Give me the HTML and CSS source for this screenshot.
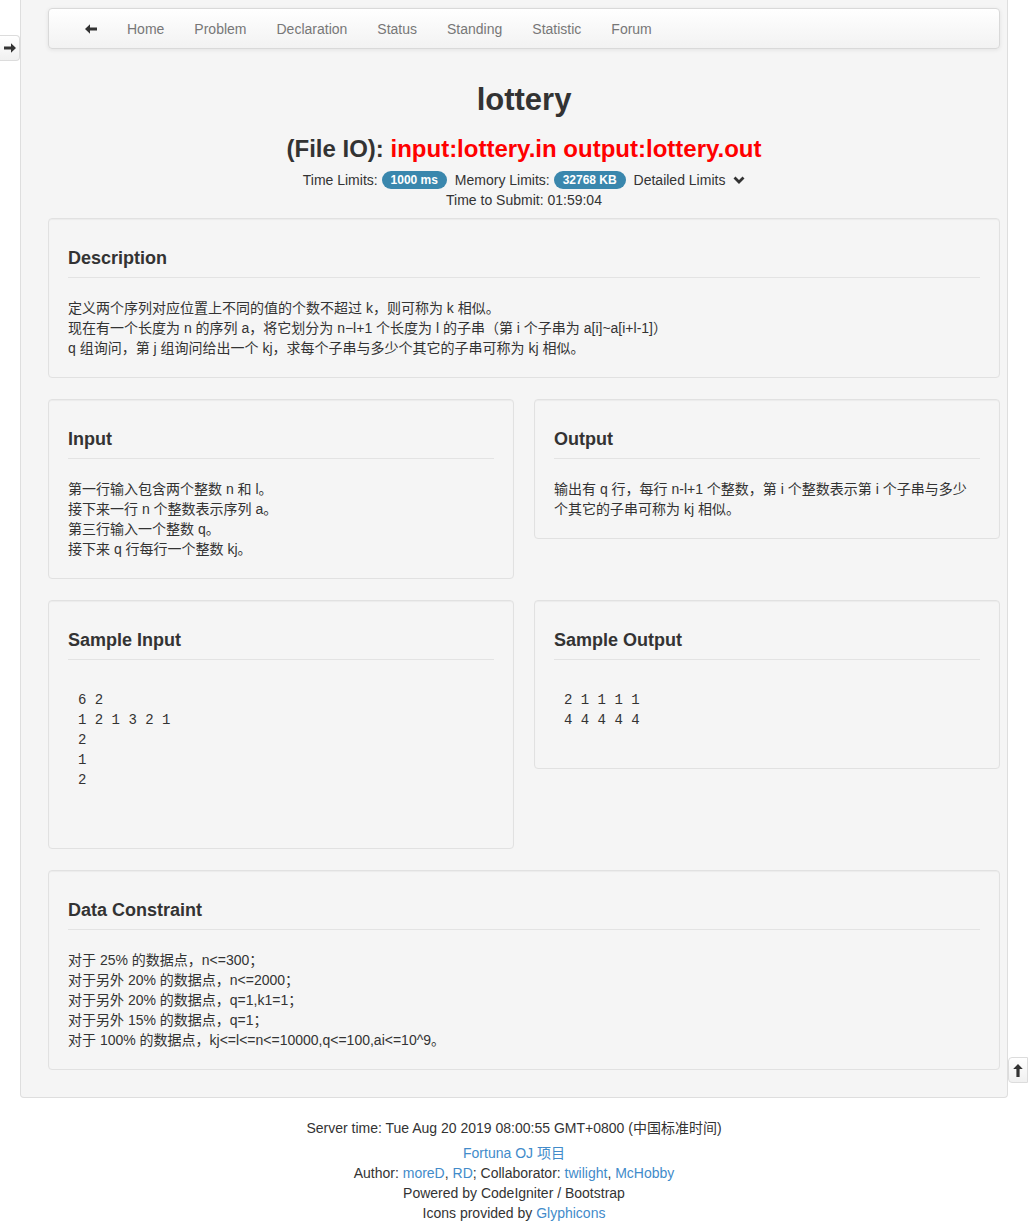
FILE: index.html
```html
<!DOCTYPE html>
<html lang="zh-CN">
<head>
<meta charset="utf-8">
<title>lottery</title>
<link rel="stylesheet" href="styles.css">
</head>
<body>
<a class="side-btn side-left" href="#"><svg class="ico" width="12" height="12" viewBox="0 0 12 12"><path d="M12 6 L7 1.2 V4.4 H0 V7.6 H7 V10.8 Z"/></svg></a>

<div class="frame">
  <nav class="navbar">
    <ul class="nav">
      <li><a href="#"><svg class="ico nav-ico" width="12" height="12" viewBox="0 0 12 12"><path d="M0 6 L5 1.2 V4.4 H12 V7.6 H5 V10.8 Z"/></svg></a></li>
      <li><a href="#">Home</a></li>
      <li><a href="#">Problem</a></li>
      <li><a href="#">Declaration</a></li>
      <li><a href="#">Status</a></li>
      <li><a href="#">Standing</a></li>
      <li><a href="#">Statistic</a></li>
      <li><a href="#">Forum</a></li>
    </ul>
  </nav>

  <header class="head">
    <h2 class="title">lottery</h2>
    <h3 class="fileio">(File IO): <span class="red">input:lottery.in output:lottery.out</span></h3>
    <div class="limits">Time Limits: <span class="badge">1000 ms</span> Memory Limits: <span class="badge">32768 KB</span> Detailed Limits <svg class="chev" width="12" height="10" viewBox="0 0 12 10"><path d="M1.5 2.5 L6 7 L10.5 2.5" fill="none" stroke="#333" stroke-width="2.8"/></svg></div>
    <div class="limits">Time to Submit: 01:59:04</div>
  </header>

  <section class="well">
    <h4>Description</h4>
    <p>定义两个序列对应位置上不同的值的个数不超过 k，则可称为 k 相似。<br>现在有一个长度为 n 的序列 a，将它划分为 n−l+1 个长度为 l 的子串（第 i 个子串为 a[i]~a[i+l-1]）<br>q 组询问，第 j 组询问给出一个 kj，求每个子串与多少个其它的子串可称为 kj 相似。</p>
  </section>

  <div class="cols">
    <section class="well">
      <h4>Input</h4>
      <p>第一行输入包含两个整数 n 和 l。<br>接下来一行 n 个整数表示序列 a。<br>第三行输入一个整数 q。<br>接下来 q 行每行一个整数 kj。</p>
    </section>
    <section class="well">
      <h4>Output</h4>
      <p>输出有 q 行，每行 n-l+1 个整数，第 i 个整数表示第 i 个子串与多少个其它的子串可称为 kj 相似。</p>
    </section>
  </div>

  <div class="cols">
    <section class="well">
      <h4>Sample Input</h4>
      <pre>6 2
1 2 1 3 2 1
2
1
2

</pre>
    </section>
    <section class="well">
      <h4>Sample Output</h4>
      <pre>2 1 1 1 1
4 4 4 4 4</pre>
    </section>
  </div>

  <section class="well">
    <h4>Data Constraint</h4>
    <p>对于 25% 的数据点，n&lt;=300；<br>对于另外 20% 的数据点，n&lt;=2000；<br>对于另外 20% 的数据点，q=1,k1=1；<br>对于另外 15% 的数据点，q=1；<br>对于 100% 的数据点，kj&lt;=l&lt;=n&lt;=10000,q&lt;=100,ai&lt;=10^9。</p>
  </section>
</div>

<footer class="footer">
  <p class="server">Server time: Tue Aug 20 2019 08:00:55 GMT+0800 (中国标准时间)</p>
  <p><a href="#">Fortuna OJ 项目</a></p>
  <p>Author: <a href="#">moreD</a>, <a href="#">RD</a>; Collaborator: <a href="#">twilight</a>, <a href="#">McHobby</a></p>
  <p>Powered by CodeIgniter / Bootstrap</p>
  <p>Icons provided by <a href="#">Glyphicons</a></p>
</footer>

<a class="side-btn side-right" href="#"><svg class="ico" width="12" height="13" viewBox="0 0 12 13"><path d="M6 0 L10.8 5 H7.6 V13 H4.4 V5 H1.2 Z"/></svg></a>
</body>
</html>
```
FILE: styles.css
```css
html, body {
  margin: 0;
  padding: 0;
  background: #fff;
}
body {
  font-family: "Liberation Sans", Arial, "Noto Sans CJK SC", sans-serif;
  font-size: 14px;
  line-height: 20px;
  color: #333;
}
a {
  color: #428bca;
  text-decoration: none;
}
.ico path {
  fill: #333;
}

.frame {
  box-sizing: border-box;
  width: 988px;
  margin-left: 20px;
  padding: 8px 7px 6px 27px;
  background: #f5f5f5;
  border: 1px solid #dedede;
  border-top: 0;
  border-radius: 0 0 4px 4px;
}

.navbar {
  box-sizing: border-box;
  height: 41px;
  background: linear-gradient(to bottom, #ffffff 0%, #f2f2f2 100%);
  border: 1px solid #d9d9d9;
  border-radius: 4px;
  box-shadow: 0 1px 4px rgba(0,0,0,0.08);
}
.nav {
  display: flex;
  list-style: none;
  margin: 0;
  padding: 0 0 0 21px;
}
.nav a {
  display: block;
  padding: 10px 15px 9px;
  line-height: 20px;
  color: #777;
  font-size: 14px;
}
.nav-ico {
  display: block;
  margin-top: 4px;
  margin-bottom: 4px;
}

.head {
  text-align: center;
}
.title {
  margin: 34px 0 0;
  font-size: 31px;
  line-height: 33px;
  font-weight: bold;
  color: #333;
}
.fileio {
  margin: 20px 0 8px;
  font-size: 24px;
  line-height: 26px;
  font-weight: bold;
  color: #333;
}
.red {
  color: #ff0000;
}
.limits {
  line-height: 20px;
}
.badge {
  display: inline-block;
  padding: 2px 9px 1px;
  margin-right: 4px;
  font-size: 12px;
  font-weight: bold;
  line-height: 15px;
  color: #fff;
  background: #3a87ad;
  border-radius: 9px;
  vertical-align: 1px;
}
.chev {
  vertical-align: 0;
  margin-left: 4px;
}
.head + .well {
  margin-top: 8px;
}

.well {
  box-sizing: border-box;
  background: #f5f5f5;
  border: 1px solid #e1e1e1;
  border-radius: 4px;
  box-shadow: inset 0 1px 1px rgba(0,0,0,0.04);
  padding: 19px;
  margin-bottom: 21px;
}
.well h4 {
  margin: 10px 0 20px;
  padding-bottom: 9px;
  border-bottom: 1px solid #e3e3e3;
  font-size: 18px;
  line-height: 20px;
  font-weight: bold;
  color: #333;
}
.well p {
  margin: 0;
}
.well pre {
  margin: 0 0 9px;
  padding: 10px;
  font-family: "Liberation Mono", "DejaVu Sans Mono", monospace;
  font-size: 14px;
  line-height: 20px;
  color: #333;
}

.cols {
  display: grid;
  grid-template-columns: 1fr 1fr;
  column-gap: 20px;
  align-items: start;
}

.footer {
  text-align: center;
  padding-top: 20px;
}
.footer p {
  margin: 0;
}
.footer .server {
  margin-bottom: 5px;
}

.side-btn {
  position: fixed;
  box-sizing: border-box;
  display: flex;
  align-items: center;
  justify-content: center;
  background: linear-gradient(to bottom, #ffffff 0%, #f0f0f0 100%);
  border: 1px solid #dcdcdc;
}
.side-left {
  left: 0;
  top: 35px;
  width: 20px;
  height: 26px;
  border-left: 0;
  border-radius: 0 4px 4px 0;
}
.side-right {
  left: 1008px;
  top: 1057px;
  width: 20px;
  height: 26px;
  border-radius: 4px 0 0 4px;
}
```
